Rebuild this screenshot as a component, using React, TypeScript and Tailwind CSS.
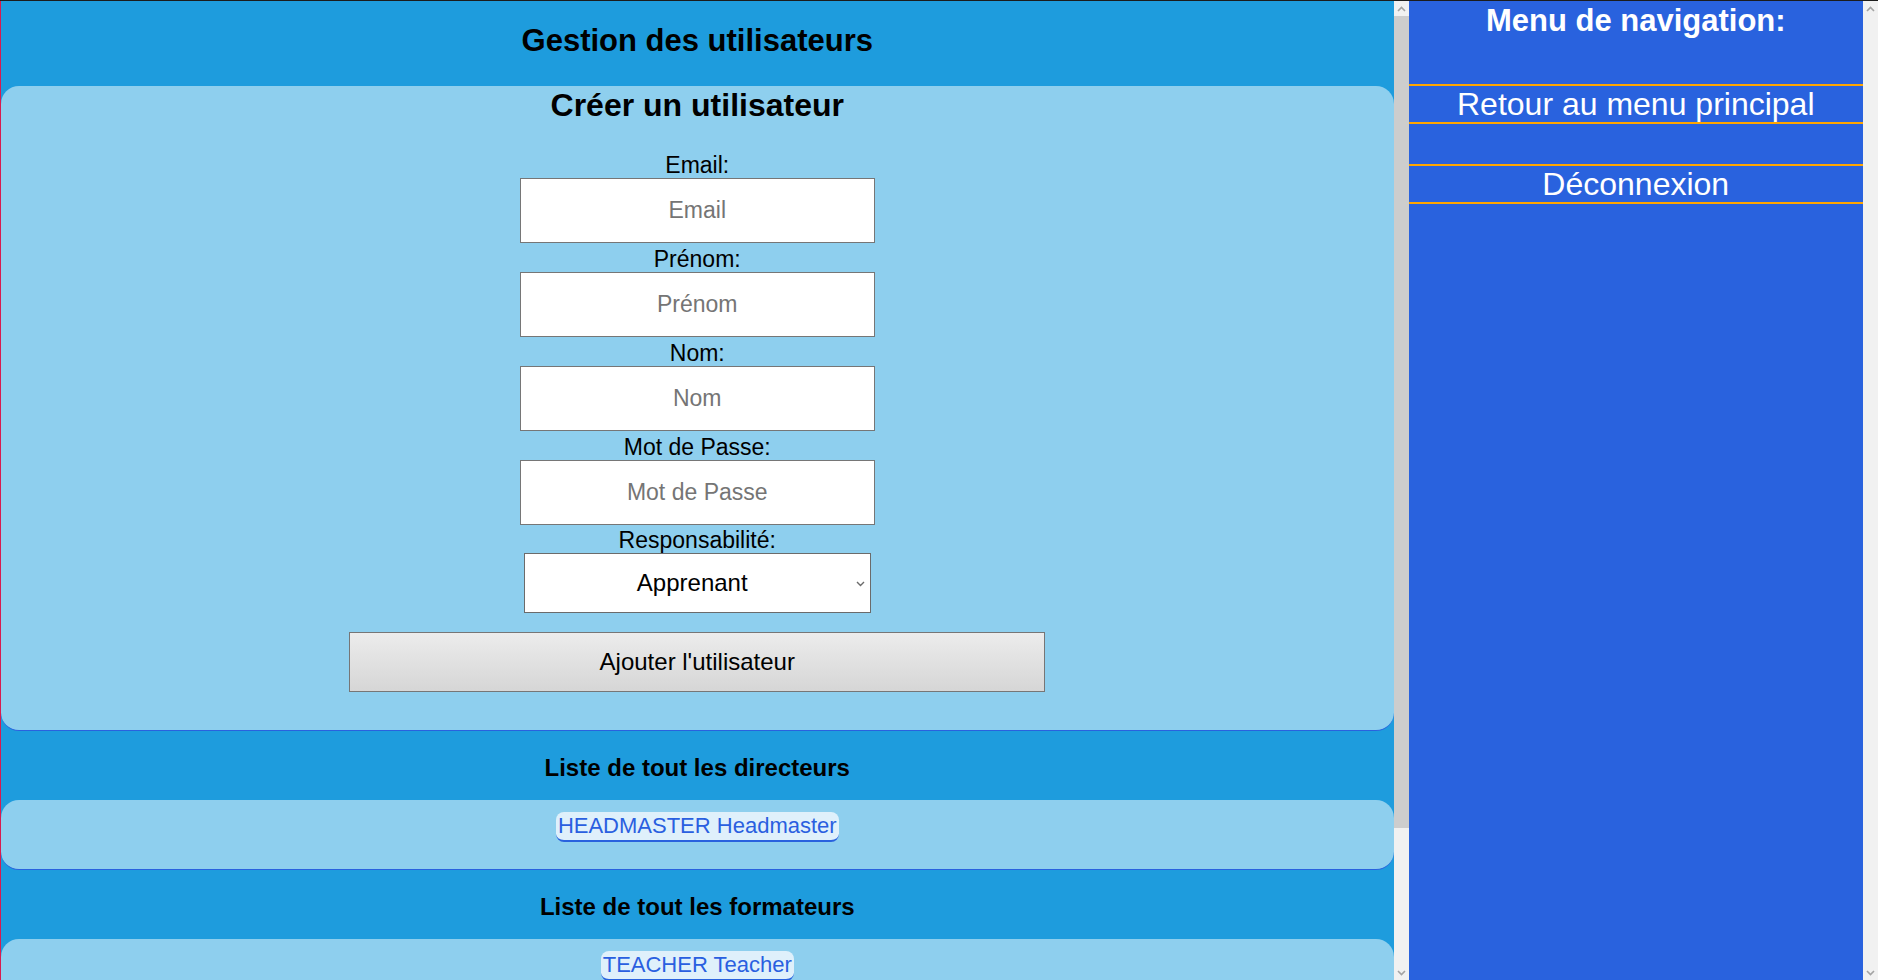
const directeurs = ["HEADMASTER Headmaster"];
const formateurs = ["TEACHER Teacher"];
const apprenants = ["STUDENT Student"];

const fields = [
  { label: "Email:", placeholder: "Email", type: "email" },
  { label: "Prénom:", placeholder: "Prénom", type: "text" },
  { label: "Nom:", placeholder: "Nom", type: "text" },
  { label: "Mot de Passe:", placeholder: "Mot de Passe", type: "password" },
];

function Arrow({ up }: { up?: boolean }) {
  return (
    <svg width="9" height="6" viewBox="0 0 9 6" className={up ? "" : "rotate-180"}>
      <path d="M1 5 L4.5 1.5 L8 5" fill="none" stroke="#a3a3a3" strokeWidth="1.6" />
    </svg>
  );
}

function Scrollbar({ thumb }: { thumb?: string }) {
  return (
    <div className="flex h-full w-[15px] shrink-0 flex-col bg-[#f1f1f1]">
      <div className="flex h-[15px] items-center justify-center">
        <Arrow up />
      </div>
      <div className="flex-1">
        {thumb && <div className={`mx-auto w-[15px] bg-[#cdcdcd] ${thumb}`} />}
      </div>
      <div className="flex h-[15px] items-center justify-center">
        <Arrow />
      </div>
    </div>
  );
}

function UserList({ title, users }: { title: string; users: string[] }) {
  return (
    <section>
      <h3 className="flex h-[69px] items-center justify-center pt-[4px] text-[24px] font-bold text-black">
        {title}
      </h3>
      <div className="flex min-h-[70px] flex-col items-center rounded-[18px] border-b border-[#2962de] bg-[#8ecfee] pb-[26px] pt-[12px]">
        {users.map((u) => (
          <a
            key={u}
            href="#"
            className="rounded-lg border-b-2 border-[#2962de] bg-[#dff0fb] px-[2px] text-[22px] leading-[28px] text-[#2a5fe0]"
          >
            {u}
          </a>
        ))}
      </div>
    </section>
  );
}

export default function App() {
  return (
    <div className="flex h-screen w-full border-t border-[#1c1c1c] font-['Liberation_Sans',Arial,sans-serif]">
      <div className="flex h-full w-3/4 border-l border-[#d81b4f]">
        <main className="h-full flex-1 overflow-hidden bg-[#1e9cdd]">
          <h1 className="h-[85px] pt-[21px] text-center text-[31px] font-bold leading-[38px] text-black">
            Gestion des utilisateurs
          </h1>

          <form className="flex flex-col items-center rounded-[18px] border-b border-[#2962de] bg-[#8ecfee] pb-[38px]">
            <h2 className="text-[32px] font-bold leading-[38px] text-black">
              Créer un utilisateur
            </h2>
            <div className="mt-[25px] flex w-full flex-col items-center">
              {fields.map((f) => (
                <label key={f.label} className="flex flex-col items-center">
                  <span className="pt-[3px] text-[23px] leading-[26px] text-black">{f.label}</span>
                  <input
                    type={f.type}
                    placeholder={f.placeholder}
                    className="h-[65px] w-[355px] border border-[#767676] bg-white text-center text-[23px] text-black placeholder:text-[#757575]"
                  />
                </label>
              ))}
              <label className="flex flex-col items-center">
                <span className="pt-[3px] text-[23px] leading-[25px] text-black">Responsabilité:</span>
                <span className="relative">
                  <select
                    defaultValue="apprenant"
                    className="h-[60px] w-[347px] appearance-none border border-[#6b6b6b] bg-white pr-[10px] text-[24px] text-black [text-align-last:center]"
                  >
                    <option value="apprenant">Apprenant</option>
                    <option value="formateur">Formateur</option>
                    <option value="directeur">Directeur</option>
                  </select>
                  <svg
                    width="9"
                    height="6"
                    viewBox="0 0 9 6"
                    className="pointer-events-none absolute right-[6px] top-[28px]"
                  >
                    <path d="M1 1 L4.5 4.5 L8 1" fill="none" stroke="#6b6b6b" strokeWidth="1.4" />
                  </svg>
                </span>
              </label>
              <button
                type="button"
                className="mt-[19px] h-[60px] w-1/2 border border-[#767676] bg-gradient-to-b from-[#ececec] to-[#d6d6d6] text-[24px] text-black"
              >
                Ajouter l'utilisateur
              </button>
            </div>
          </form>

          <UserList title="Liste de tout les directeurs" users={directeurs} />
          <UserList title="Liste de tout les formateurs" users={formateurs} />
          <UserList title="Liste de tout les apprenants" users={apprenants} />
        </main>
        <Scrollbar thumb="h-[812px]" />
      </div>

      <div className="flex h-full w-1/4">
        <nav className="h-full flex-1 bg-[#2962de] text-center text-white">
          <h2 className="text-[31px] font-bold leading-[40px]">Menu de navigation:</h2>
          <a
            href="#"
            className="mt-[43px] block h-[40px] border-y-2 border-[#ffa500] pt-[1px] text-[32px] leading-[35px]"
          >
            Retour au menu principal
          </a>
          <a
            href="#"
            className="mt-[40px] block h-[40px] border-y-2 border-[#ffa500] pt-[1px] text-[32px] leading-[35px]"
          >
            Déconnexion
          </a>
        </nav>
        <Scrollbar />
      </div>
    </div>
  );
}
